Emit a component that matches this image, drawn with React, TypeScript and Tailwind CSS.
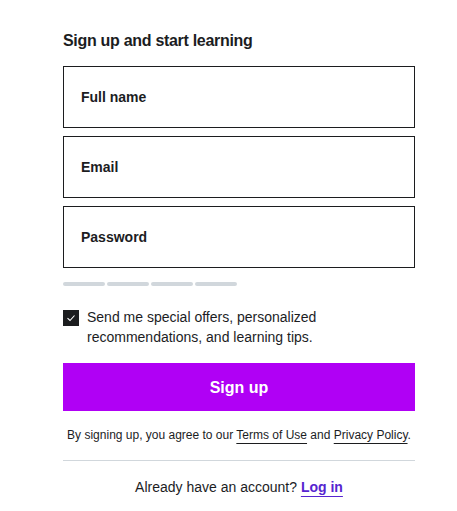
import { FC } from 'react';

const font = { fontFamily: '"Liberation Sans", Arial, sans-serif' };

const Field: FC<{ label: string }> = ({ label }) => (
  <div className="h-[62px] border border-[#1c1d1f] pl-[17px] pr-4 flex items-center">
    <span className="text-[14px] font-bold text-[#1c1d1f]">{label}</span>
  </div>
);

export default function App() {
  return (
    <div className="min-h-[511px] bg-white text-[#1c1d1f]" style={font}>
      <div className="pl-[63px] pt-[29px] w-[415px]">
        <h1 className="text-[16px] leading-6 font-bold tracking-[-0.3px] mb-[13px]">Sign up and start learning</h1>

        <div className="flex flex-col gap-2">
          <Field label="Full name" />
          <Field label="Email" />
          <Field label="Password" />
        </div>

        {/* password strength */}
        <div className="flex gap-[2px] mt-[14px]">
          {[0, 1, 2, 3].map((i) => (
            <div key={i} className="w-[42px] h-[4px] rounded-full bg-[#d1d7dc]" />
          ))}
        </div>

        <label className="flex items-start gap-2 mt-[21px]">
          <span className="mt-[3px] w-4 h-4 shrink-0 bg-[#1c1d1f] flex items-center justify-center">
            <svg width="12" height="12" viewBox="0 0 12 12" fill="none">
              <path d="M2.5 6.2 L5 8.5 L9.5 3.5" stroke="white" strokeWidth="1.1" />
            </svg>
          </span>
          <span className="text-[14px] leading-5">
            Send me special offers, personalized
            <br />
            recommendations, and learning tips.
          </span>
        </label>

        <button className="mt-4 w-full h-12 bg-[#b000f5] text-white text-[16px] font-bold pt-[2px]">Sign up</button>

        <p className="mt-[15px] text-[12px] leading-[18px] text-center whitespace-nowrap">
          By signing up, you agree to our{' '}
          <span className="underline underline-offset-[4px]">Terms of Use</span> and{' '}
          <span className="underline underline-offset-[4px]">Privacy Policy</span>.
        </p>

        <div className="mt-4 border-t border-[#d1d7dc]" />

        <p className="mt-[16px] text-[14px] leading-5 text-center">
          Already have an account?{' '}
          <span className="font-bold text-[#5624d0] underline underline-offset-[4px]">Log in</span>
        </p>
      </div>
    </div>
  );
}
